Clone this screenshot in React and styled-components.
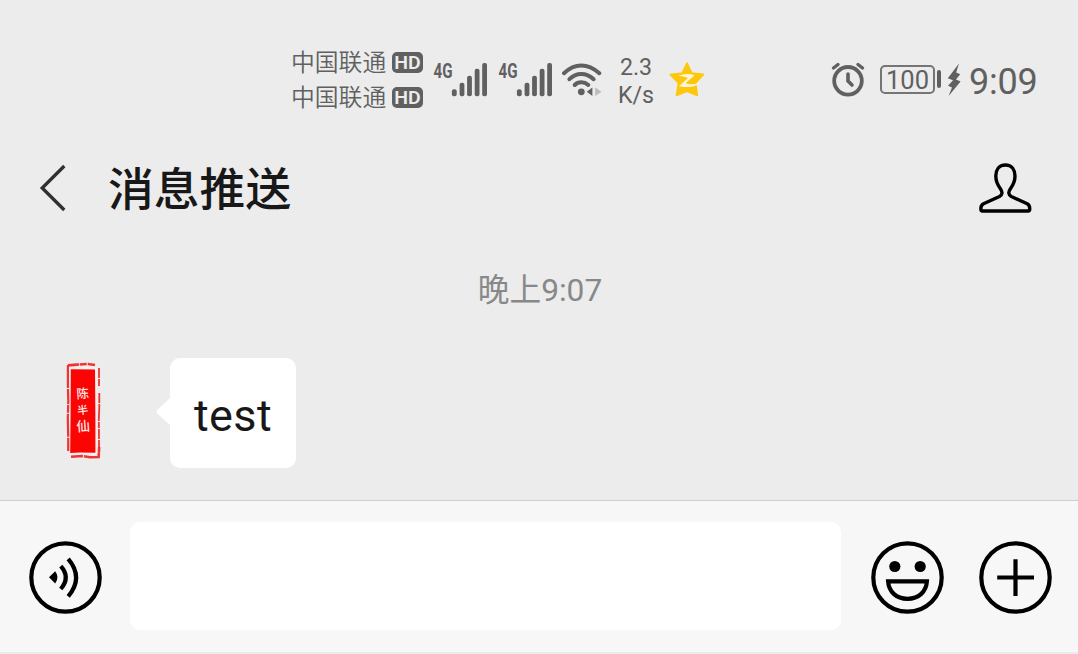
import React from 'react';
import styled, { createGlobalStyle } from 'styled-components';

const GlobalStyle = createGlobalStyle`
  * { box-sizing: border-box; }
  body { margin: 0; background: #ececec; font-family: Roboto, "Noto Sans CJK SC", sans-serif; }
  svg { display: block; flex: none; }
`;

const Screen = styled.div`
  display: flex;
  flex-direction: column;
  width: 1078px;
  height: 654px;
  overflow: hidden;
  background: #ececec;
`;

const StatusBar = styled.div`
  display: flex;
  align-items: center;
  height: 115px;
  padding: 45px 40px 0 291px;
  color: #606060;
`;

const Carriers = styled.div`
  display: flex;
  flex-direction: column;
  width: 142px;
`;

const Carrier = styled.div`
  display: flex;
  align-items: center;
  gap: 5px;
  height: 35px;
`;

const CarrierName = styled.span`
  width: 96px;
  padding-bottom: 3px;
  font: 350 23.8px/32px "Noto Sans CJK SC", sans-serif;
  white-space: nowrap;
`;

const HdBadge = styled.svg`
  width: 31px;
  height: 21px;
  overflow: visible;
`;

const Signal = styled.svg`
  width: 55px;
  height: 40px;
  margin-right: 10px;
`;

const Wifi = styled.svg`
  width: 42px;
  height: 40px;
  margin-left: -1px;
`;

const Speed = styled.div`
  width: 40px;
  margin: 2px 13px 0 12px;
  font: 400 23.2px/28px Roboto, sans-serif;
  text-align: center;
  white-space: nowrap;
`;

const StatusRight = styled.div`
  display: flex;
  align-items: center;
  margin-left: auto;
`;

const Battery = styled.div`
  display: flex;
  align-items: center;
  gap: 2px;
  margin: 0 6px 2px 15px;
`;

const BatteryLevel = styled.div`
  width: 55px;
  height: 29px;
  border: 2px solid #757575;
  border-radius: 5px;
  font: 400 25.5px/26px Roboto, sans-serif;
  text-align: center;
`;

const BatteryCap = styled.div`
  width: 4px;
  height: 18px;
  border-radius: 2px;
  background: #606060;
`;

const Clock = styled.div`
  width: 69px;
  margin: 3px 0 0 8px;
  font: 400 36px/42px Roboto, sans-serif;
  letter-spacing: -0.2px;
  white-space: nowrap;
`;

const Header = styled.header`
  display: flex;
  align-items: center;
  height: 146px;
  padding: 0 46px 0 38px;
`;

const Title = styled.h1`
  flex: 1;
  margin: 0 0 0 40px;
  padding-bottom: 4px;
  color: #181818;
  font: 500 45.8px/60px "Noto Sans CJK SC", sans-serif;
`;

const Conversation = styled.main`
  display: flex;
  flex-direction: column;
  height: 239px;
`;

const Timestamp = styled.div`
  height: 97px;
  padding: 8px 0 0 2px;
  color: #888;
  font: 400 31.7px/43px Roboto, "Noto Sans CJK SC", sans-serif;
  text-align: center;
`;

const Message = styled.div`
  display: flex;
  align-items: flex-start;
  padding-left: 30px;
`;

const Avatar = styled.svg`
  width: 108px;
  height: 108px;
  margin-right: 18px;
`;

const Tail = styled.svg`
  width: 14px;
  height: 28px;
  margin-top: 40px;
`;

const Bubble = styled.div`
  width: 126px;
  height: 110px;
  border-radius: 10px;
  background: #fff;
  color: #181818;
  font: 400 45px/115px Roboto, sans-serif;
  letter-spacing: 0.4px;
  text-align: center;
`;

const Composer = styled.footer`
  display: flex;
  align-items: flex-start;
  height: 152px;
  padding: 21px 26px 0 29px;
  border-top: 1px solid #cfcfcf;
  background: #f7f7f7;
`;

const MessageInput = styled.div`
  width: 711px;
  height: 108px;
  margin: 0 30px 0 28px;
  border-radius: 10px;
  background: #fff;
`;

const Actions = styled.div`
  display: flex;
  gap: 35px;
`;

const RoundSvg = styled.svg`
  width: 73px;
  height: 73px;
  margin-top: 19px;
`;

const RoundIcon = ({ children }) => (
  <RoundSvg viewBox="0 0 73 73" fill="none" stroke="#000" strokeWidth="4.2">
    <circle cx="36.5" cy="36.5" r="34.2" />
    {children}
  </RoundSvg>
);

const CarrierRow = ({ name }) => (
  <Carrier>
    <CarrierName>{name}</CarrierName>
    <HdBadge viewBox="0 0 31 21">
      <rect width="31" height="21" rx="5" fill="#606060" />
      <text x="2.3" y="16.8" fill="#ececec" fontFamily="Roboto, sans-serif" fontWeight="600" fontSize="17.5" textLength="26.5" lengthAdjust="spacingAndGlyphs">HD</text>
    </HdBadge>
  </Carrier>
);

const bars = [
  [18.9, 29.3],
  [26.6, 22.7],
  [34.1, 15.7],
  [41.7, 8.7],
  [49.2, 3],
];

const SignalIcon = () => (
  <Signal viewBox="0 0 55 40" fill="#606060">
    <text x="0.5" y="18" fontFamily="Roboto, sans-serif" fontWeight="700" fontSize="20.5" textLength="19" lengthAdjust="spacingAndGlyphs">4G</text>
    {bars.map(([x, y]) => (
      <rect key={x} x={x} y={y} width="4.8" height={36.2 - y} rx="2" />
    ))}
  </Signal>
);

const WifiIcon = () => (
  <Wifi viewBox="0 0 42 40" fill="none" stroke="#606060" strokeWidth="4" strokeLinecap="round">
    <path d="M2 13.2Q10 5.4 19.3 5.4T37.3 13.2" />
    <path d="M7.4 19.2Q12.5 13.9 19.3 13.9T31.7 19.2" />
    <path d="M12.7 25Q15.4 22.3 19.3 22.3T26.3 25" />
    <circle cx="19.3" cy="31.8" r="3.4" fill="#606060" stroke="none" />
    <path d="M24.7 31.8L30.4 27.6V36Z" fill="#606060" stroke="none" />
    <path d="M33.2 27.5L39.5 31.8L33.2 36Z" fill="#bcbcbc" stroke="none" />
  </Wifi>
);

const StarIcon = () => (
  <svg width="36" height="38" viewBox="0 0 36 38">
    <path d="M18 2L22.8 12L34.5 13.4L26.6 22L28.4 34.5L18 30.2L7.5 34.5L9.4 22L1.3 13.6L13.2 12Z" fill="#fdc80b" stroke="#fdc80b" strokeWidth="1.6" strokeLinejoin="round" />
    <path d="M9.5 14.5Q18 11.6 25.5 14.2L16.5 22.3Q22 24.5 31 22Q25 28 10 25.2L19 17Q14 15.2 9.5 14.5Z" fill="#fff6d8" />
  </svg>
);

const AlarmIcon = () => (
  <svg width="34" height="36" viewBox="0 0 34 36" fill="none" stroke="#606060" strokeWidth="3.8" strokeLinecap="round">
    <circle cx="17" cy="18.8" r="13.8" />
    <path d="M17 12V19L21 23" strokeWidth="3.6" />
    <path d="M2.5 6L7 2.5M31.5 6L27 2.5" strokeWidth="3.4" />
  </svg>
);

const BoltIcon = () => (
  <svg width="14" height="34" viewBox="0 0 14 34" fill="#606060">
    <path d="M12 .5L0.8 15.2L6 17.3L1 22.8L5 24.6L1.6 33L13.6 18.6L9 16.4L13.2 11.2L9.2 9.6Z" />
  </svg>
);

export default function App() {
  return (
    <>
      <GlobalStyle />
      <Screen>
        <StatusBar>
          <Carriers>
            <CarrierRow name="中国联通" />
            <CarrierRow name="中国联通" />
          </Carriers>
          <SignalIcon />
          <SignalIcon />
          <WifiIcon />
          <Speed>2.3<br />K/s</Speed>
          <StarIcon />
          <StatusRight>
            <AlarmIcon />
            <Battery>
              <BatteryLevel>100</BatteryLevel>
              <BatteryCap />
            </Battery>
            <BoltIcon />
            <Clock>9:09</Clock>
          </StatusRight>
        </StatusBar>
        <Header>
          <svg width="30" height="50" viewBox="0 0 30 50" fill="none" stroke="#303030" strokeWidth="3.3">
            <path d="M26.3 3L4.2 25L26.3 47" />
          </svg>
          <Title>消息推送</Title>
          <svg width="54" height="52" viewBox="0 0 54 52" fill="none" stroke="#000" strokeWidth="3.4" strokeLinejoin="round">
            <path d="M27.4 3C20.8 3 17.8 8 17.8 14C17.8 20.2 19.8 23.2 22.4 26.7C24.7 29.9 24.6 32.9 21.5 34.5L5.5 41.7Q2.9 43.1 2.9 46.2V47.6Q2.9 49 4.4 49H50.2Q51.7 49 51.7 47.6V46.2Q51.7 43.1 49.2 41.7L33.3 34.5C30.2 32.9 30.1 29.9 32.4 26.7C35 23.2 37 20.2 37 14C37 8 34 3 27.4 3Z" />
          </svg>
        </Header>
        <Conversation>
          <Timestamp>晚上9:07</Timestamp>
          <Message>
            <Avatar viewBox="0 0 108 108">
              <path d="M39 8.5H67.5V97H39Z" fill="#f8eeee" />
              <path d="M40.8 11.3L65 11.6L65.4 60V94.8L50 94.4L40.2 95L40.6 55Z" fill="#fb0404" />
              <g fill="none" stroke="#f03434">
                <path d="M38 7.4L47 6.6L58 6L65 7" strokeWidth="2.6" strokeDasharray="11 .8 7 1" />
                <path d="M37.9 7V30L38.3 43L37.8 60L38.2 79V93" strokeWidth="2.2" strokeDasharray="23 1 15 .7 8 1" />
                <path d="M69 10V28M69.3 35V50L68.8 61L69 80V99" strokeWidth="1.8" strokeDasharray="10 1 17 1 6 1" />
                <path d="M41 98.7L52 98L60 99.2L68.6 99L69.2 89" strokeWidth="2.6" strokeDasharray="12 1 19 .6" />
              </g>
              <g fill="#ffe9e4" fontFamily="'Noto Sans CJK SC', sans-serif" fontWeight="500" fontSize="12.5" textAnchor="middle">
                <text x="53" y="40" transform="rotate(-4 53 40)">陈</text>
                <text x="53.2" y="56.2" fontSize="11" transform="rotate(-7 53 56)">半</text>
                <text x="53.5" y="73" fontSize="13.5" transform="rotate(-4 53 73)">仙</text>
              </g>
            </Avatar>
            <Tail viewBox="0 0 14 28"><path d="M14 0L1.2 12Q0 14 1.2 15.5L14 27Z" fill="#fff" /></Tail>
            <Bubble>test</Bubble>
          </Message>
        </Conversation>
        <Composer>
          <RoundIcon>
            <path d="M20 36.3L26.2 30.3Q30.8 36.3 26.2 42.6Z" fill="#000" stroke="none" />
            <path d="M31.8 25.2Q41.8 36.4 31.8 48M39.2 17.8Q55 36.4 39.2 55.4" />
          </RoundIcon>
          <MessageInput />
          <Actions>
            <RoundIcon>
              <circle cx="23.8" cy="25.5" r="5.6" fill="#000" stroke="none" />
              <circle cx="49.2" cy="25.5" r="5.6" fill="#000" stroke="none" />
              <path d="M17.1 40.4H55.9C55.2 50.5 48 57.8 36.5 57.8S17.8 50.5 17.1 40.4Z" />
            </RoundIcon>
            <RoundIcon>
              <path d="M36.5 18.2V55M18.2 36.5H55" />
            </RoundIcon>
          </Actions>
        </Composer>
      </Screen>
    </>
  );
}
